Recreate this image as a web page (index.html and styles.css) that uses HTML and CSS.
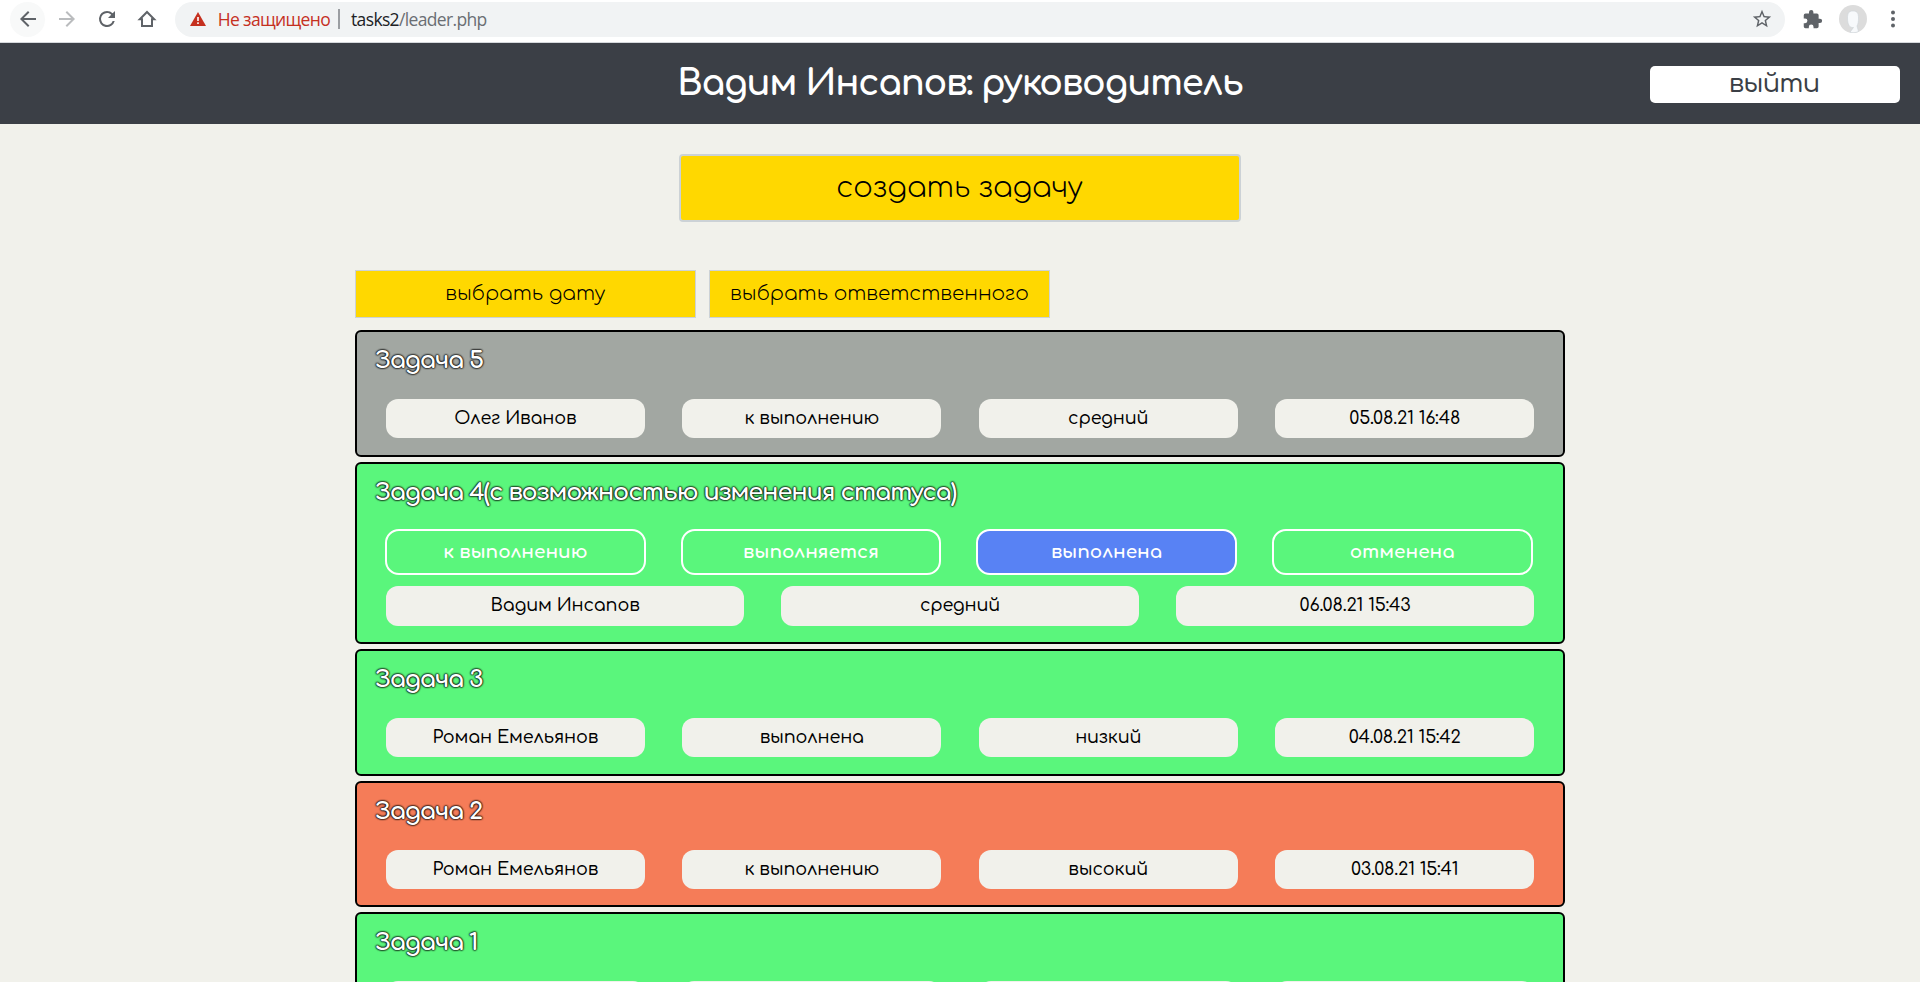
FILE: index.html
```html
<!DOCTYPE html>
<html lang="ru">
<head>
<meta charset="utf-8">
<title>Вадим Инсапов: руководитель</title>
<link rel="stylesheet" href="styles.css">
</head>
<body>
<div class="browser">
  <span class="nav nav-back"><svg width="24" height="24" viewBox="0 0 24 24" fill="#5f6368"><path d="M20 11H7.83l5.59-5.59L12 4l-8 8 8 8 1.41-1.41L7.83 13H20z"/></svg></span>
  <span class="nav"><svg width="24" height="24" viewBox="0 0 24 24" fill="#babcbe"><path d="M12 4l-1.41 1.41L16.17 11H4v2h12.17l-5.58 5.59L12 20l8-8z"/></svg></span>
  <span class="nav"><svg width="24" height="24" viewBox="0 0 24 24" fill="#5f6368"><path d="M17.65 6.35A7.96 7.96 0 0 0 12 4a8 8 0 1 0 7.73 10h-2.08A6 6 0 1 1 12 6c1.66 0 3.14.69 4.22 1.78L13 11h7V4z"/></svg></span>
  <span class="nav"><svg width="24" height="24" viewBox="0 0 24 24" fill="none" stroke="#5f6368" stroke-width="2"><path d="M4.8 12.2H7V19h10v-6.800h2.200L12 5z"/></svg></span>
  <div class="omnibox">
    <svg width="16" height="14" viewBox="0 0 16 14"><path fill="#c5301f" d="M8 0l8 14H0z"/><path fill="#fff" d="M7.200 5h1.600v4H7.200zM7.200 10.300h1.600v1.600H7.200z"/></svg>
    <span class="insecure">Не защищено</span>
    <span class="divider"></span>
    <span class="url"><span class="host">tasks2</span>/leader.php</span>
    <svg class="star" width="22" height="22" viewBox="0 0 24 24" fill="#5f6368"><path d="M22 9.240l-7.190-.620L12 2 9.190 8.630 2 9.240l5.460 4.730L5.820 21 12 17.270 18.180 21l-1.630-7.030zM12 15.400l-3.760 2.270 1-4.280-3.320-2.880 4.380-.380L12 6.100l1.710 4.040 4.380.380-3.320 2.880 1 4.280z"/></svg>
  </div>
  <svg class="puzzle" width="21" height="21" viewBox="0 0 24 24" fill="#5f6368"><path d="M20.500 11H19V7a2 2 0 0 0-2-2h-4V3.500a2.500 2.500 0 0 0-5 0V5H4a2 2 0 0 0-2 2v3.800h1.500a2.700 2.700 0 0 1 0 5.400H2V20a2 2 0 0 0 2 2h3.800v-1.500a2.700 2.700 0 0 1 5.400 0V22H17a2 2 0 0 0 2-2v-4h1.500a2.500 2.500 0 0 0 0-5z"/></svg>
  <svg class="avatar" width="28" height="28" viewBox="0 0 28 28"><circle cx="14" cy="14" r="14" fill="#dcdcdc"/><path fill="#f7f9fb" stroke="#cdd3d9" stroke-width=".6" d="M8.500 13c0-5 1.500-7 5.500-7s5.500 2 5.500 7c0 4-.5 6-1.500 8l1.500 5.500c-3 1.500-6 1.500-8.500.7l3.500-4.700c-4 .5-6-3-6-9.500z"/></svg>
  <svg class="dots" width="6" height="18" viewBox="0 0 6 18" fill="#5f6368"><circle cx="3" cy="2.500" r="2"/><circle cx="3" cy="9" r="2"/><circle cx="3" cy="15.500" r="2"/></svg>
</div>

<header class="header">
  <h1 class="header-title">Вадим Инсапов: руководитель</h1>
  <button class="exit">выйти</button>
</header>

<main class="main">
  <button class="create">создать задачу</button>
  <div class="filters">
    <button class="filter">выбрать дату</button>
    <button class="filter">выбрать ответственного</button>
  </div>

  <section class="task gray">
    <h2 class="task-title">Задача 5</h2>
    <div class="row">
      <span class="chip">Олег Иванов</span><span class="chip">к выполнению</span><span class="chip">средний</span><span class="chip">05.08.21 16:48</span>
    </div>
  </section>

  <section class="task green editable">
    <h2 class="task-title">Задача 4(с возможностью изменения статуса)</h2>
    <div class="statuses">
      <button class="status">к выполнению</button><button class="status">выполняется</button><button class="status active">выполнена</button><button class="status">отменена</button>
    </div>
    <div class="row three">
      <span class="chip">Вадим Инсапов</span><span class="chip">средний</span><span class="chip">06.08.21 15:43</span>
    </div>
  </section>

  <section class="task green">
    <h2 class="task-title">Задача 3</h2>
    <div class="row">
      <span class="chip">Роман Емельянов</span><span class="chip">выполнена</span><span class="chip">низкий</span><span class="chip">04.08.21 15:42</span>
    </div>
  </section>

  <section class="task red">
    <h2 class="task-title">Задача 2</h2>
    <div class="row">
      <span class="chip">Роман Емельянов</span><span class="chip">к выполнению</span><span class="chip">высокий</span><span class="chip">03.08.21 15:41</span>
    </div>
  </section>

  <section class="task green">
    <h2 class="task-title">Задача 1</h2>
    <div class="row">
      <span class="chip"></span><span class="chip"></span><span class="chip"></span><span class="chip"></span>
    </div>
  </section>
</main>
</body>
</html>
```
FILE: styles.css
```css
* { box-sizing: border-box; }

body {
  display: flex;
  flex-direction: column;
  margin: 0;
  height: 982px;
  overflow: hidden;
  background: #f1f1eb;
  font-family: Comfortaa, Inter, sans-serif;
  color: #000;
}

button { font-family: inherit; padding: 0; white-space: nowrap; }
svg { flex: none; display: block; }

/* Browser toolbar */
.browser {
  display: flex;
  flex: none;
  align-items: center;
  height: 43px;
  padding: 0 25px 4px 10px;
  background: #fff;
  border-bottom: 1px solid #d5d8dc;
  font-family: "Segoe UI", "Open Sans", sans-serif;
  font-size: 17.500px;
  letter-spacing: -0.650px;
}
.nav {
  display: flex;
  align-items: center;
  justify-content: center;
  width: 35px;
  height: 35px;
  margin-right: 4.700px;
  border-radius: 50%;
}
.nav-back { background: #f8f9f9; }
.omnibox {
  display: flex;
  align-items: center;
  flex: 1;
  height: 35px;
  margin-left: 6px;
  padding: 0 12px 0 15px;
  border-radius: 18px;
  background: #f1f3f4;
}
.insecure { margin-left: 12px; color: #c5301f; }
.divider { width: 2px; height: 20px; margin: 0 11px 0 8px; background: #9b9ea2; }
.url { color: #6a6e73; }
.host { color: #202124; }
.star { margin-left: auto; }
.puzzle { margin-left: 17px; }
.avatar { margin-left: 16px; }
.dots { margin-left: 23px; margin-right: -1px; }

/* Page header */
.header {
  display: grid;
  flex: none;
  grid-template-columns: 1fr auto 1fr;
  align-items: center;
  height: 81px;
  padding: 1px 20px 0;
  background: #3b3f46;
}
.header-title {
  grid-column: 2;
  margin: 0;
  padding-bottom: 1px;
  color: #fff;
  font-size: 35.200px;
  font-weight: 700;
  line-height: 44px;
  letter-spacing: -1.200px;
  white-space: nowrap;
}
.exit {
  justify-self: end;
  width: 250px;
  height: 37px;
  padding: 0 2px 2px 0;
  border: 0;
  border-radius: 5px;
  background: #fff;
  color: #3b3f46;
  font-size: 25.600px;
  font-weight: 500;
  letter-spacing: -0.800px;
}

/* Content */
.main {
  display: flex;
  flex: 1;
  min-height: 0;
  overflow: hidden;
  flex-direction: column;
  width: 1210px;
  margin: 0 auto;
  padding-top: 30px;
}
.create {
  flex: none;
  align-self: center;
  width: 562px;
  height: 68px;
  border: 2px solid #ccd2d6;
  border-radius: 4px;
  background: #ffd800;
  color: #000;
  font-size: 28.800px;
  font-weight: 300;
}
.filters { display: flex; flex: none; gap: 13px; margin: 48px 0 12px; }
.filter {
  width: 341px;
  height: 48px;
  padding-bottom: 2px;
  border: 1px solid #ccd2d6;
  background: #ffd800;
  color: #000;
  font-size: 20px;
  font-weight: 300;
}

.task {
  height: 126.800px;
  flex: none;
  margin-bottom: 5px;
  padding: 13px 29px 0;
  border: 2px solid #000;
  border-radius: 6px;
}
.editable { height: 182px; }
.gray { background: #a2a7a2; }
.green { background: #5af67c; }
.red { background: #f57c58; }
.task-title {
  margin: 0 0 22px -11px;
  color: #fff;
  font-size: 24px;
  font-weight: 700;
  line-height: 32px;
  letter-spacing: -1.150px;
  text-shadow: 0 0 2px #000, 0 0 2px #000, 0 0 2px #000;
}
.row { display: grid; grid-template-columns: repeat(4, 1fr); gap: 37.800px; }
.row.three { grid-template-columns: repeat(3, 1fr); gap: 37px; }
.chip {
  height: 39px;
  border-radius: 12px;
  background: #f1f1eb;
  font-size: 17.600px;
  font-weight: 500;
  line-height: 38px;
  letter-spacing: -0.150px;
  text-align: center;
}
.three .chip { height: 40px; }
.statuses {
  display: grid;
  grid-template-columns: repeat(4, 1fr);
  gap: 35px;
  margin: -2px 1.500px 11px -1px;
}
.status {
  height: 46px;
  border: 2px solid #fff;
  border-radius: 14px;
  background: transparent;
  color: #fff;
  font-size: 18.400px;
  font-weight: 700;
}
.status.active { background: #5882f4; }
```
